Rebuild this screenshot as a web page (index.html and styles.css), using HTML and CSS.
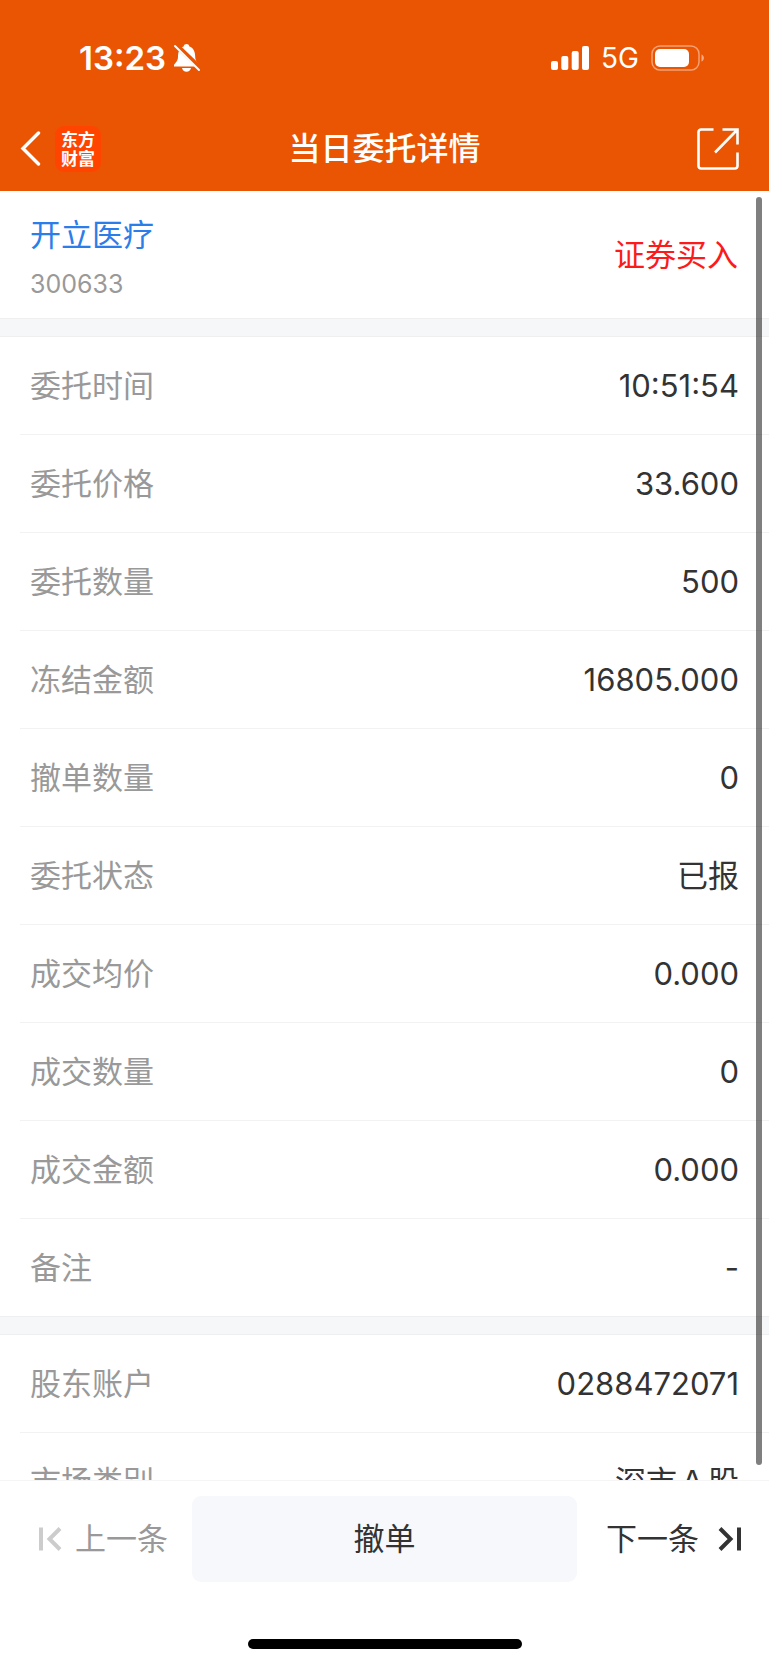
FILE: index.html
```html
<!DOCTYPE html>
<html lang="zh-CN">
<head>
  <meta charset="UTF-8">
  <meta name="viewport" content="width=device-width, initial-scale=1">
  <title>当日委托详情</title>
  <link rel="stylesheet" href="styles.css">
</head>
<body>
  <header>
    <div class="status-bar">
      <div class="status-left">
        <span class="clock">13:23</span>
        <svg class="icon-bell" width="28" height="30" viewBox="0 0 28 30">
          <path d="M1 23.5v-1.3c0-1.5 4-3.6 4-8.2C5 8 7 4.500 10.600 3.400 11 1.800 12.200 1 13.500 1s2.500.8 2.900 2.400C20 4.500 22.200 8 22.200 14c0 4.600 3.800 6.700 3.800 8.200v1.300z" fill="#fff"/>
          <path d="M9 25h9c-.4 2.200-2.300 3.700-4.500 3.700S9.400 27.200 9 25z" fill="#fff"/>
          <path d="M2.500 1.500L28 26" stroke="#ea5504" stroke-width="5"/>
          <path d="M2 3L26 27" stroke="#fff" stroke-width="2" stroke-linecap="round"/>
        </svg>
      </div>
      <div class="status-right">
        <svg width="39" height="26" viewBox="0 0 39 26" fill="#fff">
          <rect x="1" y="16" width="7" height="9" rx="2"/>
          <rect x="11.300" y="11" width="7" height="14" rx="2"/>
          <rect x="21.700" y="6" width="7" height="19" rx="2"/>
          <rect x="32" y="1" width="7" height="24" rx="2"/>
        </svg>
        <span class="network">5G</span>
        <svg width="54" height="28" viewBox="0 0 54 28">
          <rect x="1" y="2" width="47" height="24" rx="8" fill="none" stroke="#fff" stroke-opacity=".45" stroke-width="1.500"/>
          <rect x="4" y="5" width="34" height="18" rx="5" fill="#fff"/>
          <path d="M50.500 10.500c3.200 1.200 3.200 5.800 0 7z" fill="#fff" fill-opacity=".5"/>
        </svg>
      </div>
    </div>
    <nav>
      <div class="nav-left">
        <button class="icon-btn" aria-label="返回">
          <svg width="22" height="36" viewBox="0 0 22 36" fill="none" stroke="#fff" stroke-width="3.400" stroke-linecap="round">
            <path d="M19.500 2L4 17.500 19.500 33"/>
          </svg>
        </button>
        <a class="logo" href="#">东方<br>财富</a>
      </div>
      <h1>当日委托详情</h1>
      <button class="icon-btn share" aria-label="分享">
        <svg width="42" height="42" viewBox="0 0 42 42" fill="none" stroke="#fff" stroke-width="2.600">
          <path d="M16.500 1.500H4A2.500 2.500 0 0 0 1.500 4v34A2.500 2.500 0 0 0 4 40.500h34a2.500 2.500 0 0 0 2.500-2.500V24.500"/>
          <path d="M25.500 1.500h15v15M40 2L18 24.500"/>
        </svg>
      </button>
    </nav>
  </header>

  <main>
    <div class="scrollbar"></div>
    <section class="stock">
      <div class="stock-info">
        <a class="stock-name" href="#">开立医疗</a>
        <p class="stock-code">300633</p>
      </div>
      <span class="side">证券买入</span>
    </section>

    <dl class="detail">
      <div class="row"><dt>委托时间</dt><dd>10:51:54</dd></div>
      <div class="row"><dt>委托价格</dt><dd>33.600</dd></div>
      <div class="row"><dt>委托数量</dt><dd>500</dd></div>
      <div class="row"><dt>冻结金额</dt><dd>16805.000</dd></div>
      <div class="row"><dt>撤单数量</dt><dd>0</dd></div>
      <div class="row"><dt>委托状态</dt><dd>已报</dd></div>
      <div class="row"><dt>成交均价</dt><dd>0.000</dd></div>
      <div class="row"><dt>成交数量</dt><dd>0</dd></div>
      <div class="row"><dt>成交金额</dt><dd>0.000</dd></div>
      <div class="row"><dt>备注</dt><dd>-</dd></div>
    </dl>

    <dl class="detail">
      <div class="row"><dt>股东账户</dt><dd>0288472071</dd></div>
      <div class="row"><dt>市场类别</dt><dd>深市Ａ股</dd></div>
    </dl>
  </main>

  <footer>
    <div class="actions">
      <button class="prev" disabled>
        <svg width="24" height="24" viewBox="0 0 24 24" fill="none" stroke="#ccc" stroke-width="4">
          <path d="M3 .5v23M22 1.500L11.500 12 22 22.500"/>
        </svg>
        上一条
      </button>
      <button class="cancel">撤单</button>
      <button class="next">
        下一条
        <svg width="24" height="24" viewBox="0 0 24 24" fill="none" stroke="#333" stroke-width="4">
          <path d="M2 1.500L12.500 12 2 22.500M21 .5v23"/>
        </svg>
      </button>
    </div>
    <div class="home-bar"></div>
  </footer>
</body>
</html>
```
FILE: styles.css
```css
* {
  box-sizing: border-box;
}

body {
  margin: 0;
  height: 100vh;
  display: flex;
  flex-direction: column;
  font-family: Inter, "Noto Sans CJK SC", sans-serif;
  font-size: 31px;
  line-height: 44px;
  color: #333;
  background: #fff;
}

button {
  font: inherit;
  color: inherit;
  background: none;
  border: none;
  padding: 0;
  cursor: pointer;
}

a {
  text-decoration: none;
}

svg {
  display: block;
  flex: none;
}

header {
  flex: none;
  background: #ea5504;
  color: #fff;
}

.status-bar {
  display: flex;
  justify-content: space-between;
  align-items: center;
  height: 106px;
  padding: 9px 64px 0 79px;
}

.status-left,
.status-right {
  display: flex;
  align-items: center;
}

.status-left {
  gap: 7px;
}

.status-right {
  gap: 12px;
}

.clock {
  font-size: 33px;
  font-weight: 600;
}

.network {
  font-size: 28px;
}

nav {
  display: grid;
  grid-template-columns: 1fr auto 1fr;
  align-items: center;
  height: 85px;
  padding: 0 30px 0 19px;
}

.nav-left {
  display: flex;
  align-items: center;
  gap: 14px;
}

.logo {
  width: 46px;
  height: 46px;
  padding-top: 3px;
  border-radius: 9px;
  background: #ff4400;
  color: #fff;
  font-family: "Noto Sans CJK SC", sans-serif;
  font-size: 17px;
  font-weight: 700;
  line-height: 19px;
  text-align: center;
}

nav h1 {
  margin: 0;
  padding-left: 11px;
  font-size: 32px;
  font-weight: 500;
}

.share {
  justify-self: end;
}

main {
  position: relative;
  flex: 1;
  min-height: 0;
  overflow: hidden;
}

.scrollbar {
  position: absolute;
  top: 6px;
  right: 7px;
  bottom: 15px;
  width: 6px;
  border-radius: 3px;
  background: rgba(0, 0, 0, 0.5);
}

.stock {
  display: flex;
  justify-content: space-between;
  align-items: center;
  height: 127px;
  padding: 0 31px 0 30px;
}

.stock-info {
  padding-top: 9px;
}

.stock-name {
  color: #2b7de9;
}

.stock-code {
  margin: 5px 0 0;
  font-size: 25px;
  color: #999;
}

.side {
  color: #fb1b1b;
}

.detail {
  margin: 0;
}

.detail::before {
  content: "";
  display: block;
  height: 17px;
  border: solid #eeeff1;
  border-width: 1px 0;
  background: #f6f7f9;
}

.row {
  display: flex;
  justify-content: space-between;
  align-items: center;
  height: 98px;
  margin-left: 20px;
  padding: 0 30px 0 10px;
  border-bottom: 1px solid #f2f2f3;
}

.row:last-child {
  height: 97px;
  border-bottom: none;
}

.row dt {
  color: #999;
}

.row dd {
  margin: 0;
}

footer {
  flex: none;
  padding: 15px 0 16px;
  border-top: 1px solid #f5f5f5;
  background: #fff;
}

.actions {
  display: grid;
  grid-template-columns: 1fr 2fr 1fr;
  height: 86px;
}

.prev,
.next {
  display: flex;
  align-items: center;
}

.prev {
  gap: 13px;
  padding-left: 38px;
  color: #999;
}

.next {
  justify-content: flex-end;
  gap: 19px;
  padding-right: 27px;
}

.cancel {
  border-radius: 9px;
  background: #f7f8fb;
}

.home-bar {
  width: 274px;
  height: 10px;
  margin: 57px auto 0;
  border-radius: 5px;
  background: #000;
}
```
